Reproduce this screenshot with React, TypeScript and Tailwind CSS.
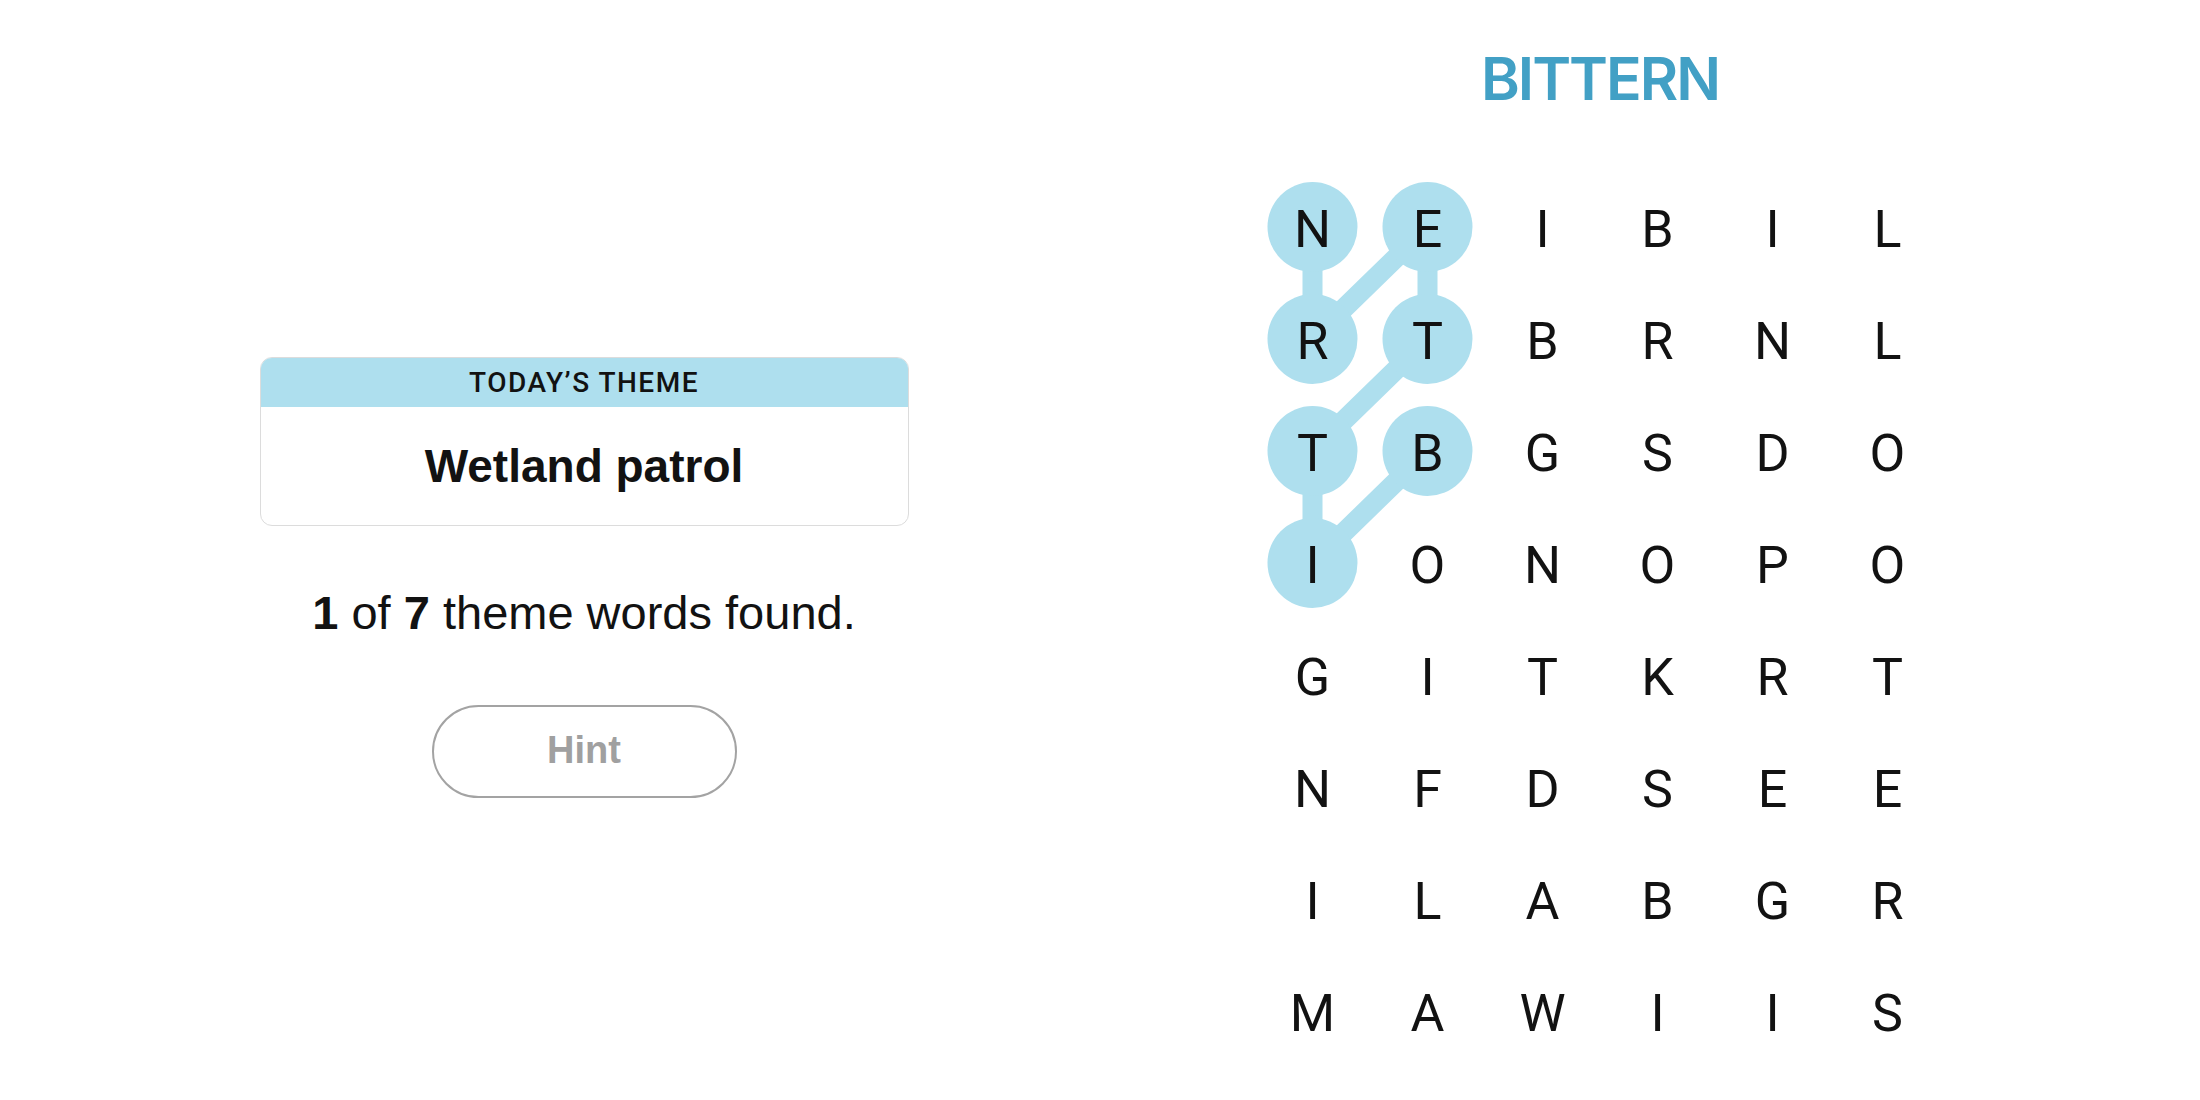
import React from "react";

const grid = [
  "NEIBIL",
  "RTBRNL",
  "TBGSDO",
  "IONOPO",
  "GITKRT",
  "NFDSEE",
  "ILABGR",
  "MAWIIS",
];

// cells of the found word, in path order (row, col)
const found: [number, number][] = [
  [0, 0],
  [1, 0],
  [0, 1],
  [1, 1],
  [2, 0],
  [3, 0],
  [2, 1],
];

const CELL_W = 115;
const CELL_H = 112;

function ThemeCard() {
  return (
    <div className="w-[649px] rounded-[12px] border border-[#dcdcdc] overflow-hidden bg-white">
      <div className="h-[49px] bg-[#aedfee] flex items-center justify-center">
        <span className="font-['Roboto',sans-serif] font-medium text-[28px] leading-none tracking-[1.5px] text-[#121212]">
          TODAY’S THEME
        </span>
      </div>
      <div className="h-[118px] flex items-center justify-center">
        <span className="font-['Liberation_Sans',sans-serif] font-bold text-[46px] leading-none text-[#121212]">
          Wetland patrol
        </span>
      </div>
    </div>
  );
}

function Board() {
  const pts = found
    .map(([r, c]) => `${57.5 + c * CELL_W},${56 + r * CELL_H}`)
    .join(" ");

  return (
    <div className="relative w-[690px] h-[896px]">
      <svg className="absolute inset-0" width={690} height={896}>
        <polyline
          points={pts}
          fill="none"
          stroke="#aedfee"
          strokeWidth={20}
          strokeLinejoin="round"
        />
        {found.map(([r, c]) => (
          <circle
            key={`${r}-${c}`}
            cx={57.5 + c * CELL_W}
            cy={56 + r * CELL_H}
            r={45}
            fill="#aedfee"
          />
        ))}
      </svg>
      <div className="relative grid grid-cols-[repeat(6,115px)] grid-rows-[repeat(8,112px)]">
        {grid.map((row, r) =>
          row.split("").map((ch, c) => (
            <div
              key={`${r}-${c}`}
              className="flex items-center justify-center pt-[6px] font-['Roboto',sans-serif] text-[52px] leading-none text-[#121212]"
            >
              {ch}
            </div>
          ))
        )}
      </div>
    </div>
  );
}

export default function App() {
  return (
    <div className="w-[2200px] h-[1100px] bg-white flex overflow-hidden">
      <div className="w-[1168px] flex flex-col items-center pt-[357px]">
        <ThemeCard />
        <p className="mt-[64px] font-['Liberation_Sans',sans-serif] text-[47px] leading-[46px] text-[#121212]">
          <span className="font-bold">1</span> of <span className="font-bold">7</span> theme words found.
        </p>
        <button className="mt-[69px] w-[305px] h-[93px] rounded-full border-2 border-[#a3a3a3] flex items-center justify-center pb-[4px] font-['Liberation_Sans',sans-serif] font-bold text-[38px] leading-none text-[#a0a0a0]">
          Hint
        </button>
      </div>
      <div className="w-[864px] flex flex-col items-center pt-[49px]">
        <h1 className="h-[59px] font-['Inter',sans-serif] font-semibold text-[59px] leading-[59px] tracking-[-2px] text-[#42a0c5]">
          BITTERN
        </h1>
        <div className="mt-[63px]">
          <Board />
        </div>
      </div>
    </div>
  );
}
